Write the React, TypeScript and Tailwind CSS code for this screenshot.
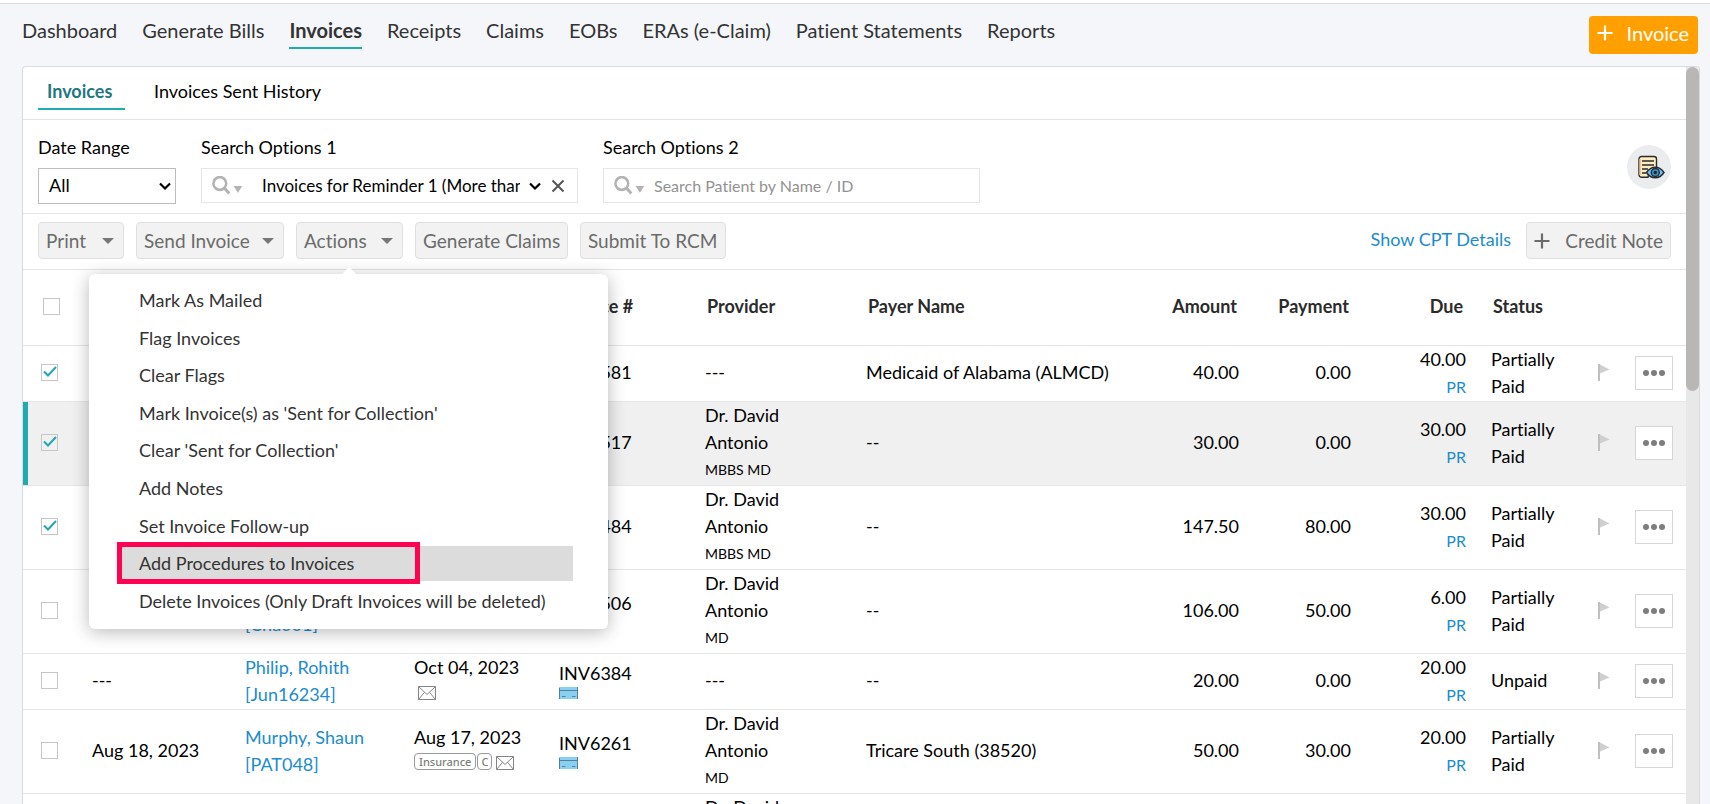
import React from 'react';

interface Invoice {
  checked?: boolean;
  active?: boolean;
  short?: boolean;
  date?: string;
  patient?: string[];
  created?: string;
  insurance?: boolean;
  mail?: boolean;
  number: string;
  card?: boolean;
  credentials?: string;
  payer: string;
  amount: string;
  payment: string;
  due: string;
  status: string;
}

const navItems = ['Dashboard', 'Generate Bills', 'Invoices', 'Receipts', 'Claims', 'EOBs', 'ERAs (e-Claim)', 'Patient Statements', 'Reports'];

const menuItems = [
  'Mark As Mailed',
  'Flag Invoices',
  'Clear Flags',
  "Mark Invoice(s) as 'Sent for Collection'",
  "Clear 'Sent for Collection'",
  'Add Notes',
  'Set Invoice Follow-up',
  'Add Procedures to Invoices',
  'Delete Invoices (Only Draft Invoices will be deleted)',
];

const invoices: Invoice[] = [
  { checked: true, short: true, number: 'INV6581', payer: 'Medicaid of Alabama (ALMCD)', amount: '40.00', payment: '0.00', due: '40.00', status: 'Partially Paid' },
  { checked: true, active: true, number: 'INV6517', credentials: 'MBBS MD', payer: '--', amount: '30.00', payment: '0.00', due: '30.00', status: 'Partially Paid' },
  { checked: true, number: 'INV6484', credentials: 'MBBS MD', payer: '--', amount: '147.50', payment: '80.00', due: '30.00', status: 'Partially Paid' },
  { patient: ['Chandra', '[Cha001]'], number: 'INV6506', card: true, credentials: 'MD', payer: '--', amount: '106.00', payment: '50.00', due: '6.00', status: 'Partially Paid' },
  { short: true, date: '---', patient: ['Philip, Rohith', '[Jun16234]'], created: 'Oct 04, 2023', mail: true, number: 'INV6384', card: true, payer: '--', amount: '20.00', payment: '0.00', due: '20.00', status: 'Unpaid' },
  { date: 'Aug 18, 2023', patient: ['Murphy, Shaun', '[PAT048]'], created: 'Aug 17, 2023', insurance: true, mail: true, number: 'INV6261', card: true, credentials: 'MD', payer: 'Tricare South (38520)', amount: '50.00', payment: '30.00', due: '20.00', status: 'Partially Paid' },
  { number: '', credentials: 'MD', payer: '', amount: '', payment: '', due: '', status: '' },
];

const Caret: React.FC = () => (
  <svg className="mr-0.5" width="12" height="6" viewBox="0 0 12 6" fill="#777">
    <path d="M0 0h12L6 6z" />
  </svg>
);

const Chevron: React.FC = () => (
  <svg className="pointer-events-none absolute right-1 top-1/2 -translate-y-1/2" width="14" height="14" viewBox="0 0 14 14" fill="none" stroke="#000" strokeWidth="2.2">
    <path d="M2 4.5l5 5 5-5" />
  </svg>
);

const SearchIcon: React.FC = () => (
  <svg className="shrink-0" width="31" height="19" viewBox="0 0 31 19" fill="none" stroke="#b3b3b3">
    <circle cx="7.8" cy="7.5" r="6.4" strokeWidth="2.6" />
    <path d="M12.3 12l5 5.4" strokeWidth="3" />
    <path d="M21.5 10h8.800l-4.400 6.800z" fill="#b3b3b3" stroke="none" />
  </svg>
);

const PlusIcon: React.FC = () => (
  <svg className="shrink-0" width="16" height="16" viewBox="0 0 16 16" stroke="currentColor" strokeWidth="2.2">
    <path d="M8 0.5v15M0.5 8h15" />
  </svg>
);

const ReportIcon: React.FC = () => (
  <svg width="28" height="24" viewBox="0 0 28 24" fill="none" stroke="#2b2b33" strokeWidth="1.4">
    <path d="M11 22.300H4.500a2.500 2.500 0 0 1-2.500-2.500V4a2.500 2.500 0 0 1 2.500-2.500h12.500a2.500 2.500 0 0 1 2.500 2.500v9.500L12 18z" fill="#ffeebb" />
    <path d="M3.200 20V4" stroke="#f5c69b" strokeWidth="1.600" />
    <path d="M5 6h12M5 10h12M5 14h6M5 18h4" />
    <path d="M9.500 17.500c4.500-7 13-7 17.500 0-4.500 7-13 7-17.500 0z" fill="#6fc0ef" />
    <circle cx="18.300" cy="17.500" r="4" fill="#3f8fc4" />
    <circle cx="18.300" cy="17.500" r="1.700" fill="#1c2733" stroke="none" />
  </svg>
);

const MailIcon: React.FC = () => (
  <svg width="18" height="14" viewBox="0 0 18 14" fill="none" stroke="#858585">
    <path d="M0.500 0.500h17v13h-17zM0.500 0.500l8.500 8 8.500-8M0.500 13.500l6-7.300M17.500 13.500l-6-7.300" />
  </svg>
);

const CardIcon: React.FC = () => (
  <svg width="19" height="12" viewBox="0 0 19 12">
    <path d="M0 0h19v12H0z" fill="#89cff2" />
    <path d="M0 3.500h18.500M18.500 0v12M0.500 1v11M3 9.500h3.500M13 9.500h3.500" stroke="#57819b" fill="none" />
  </svg>
);

const FlagIcon: React.FC = () => (
  <svg width="12" height="17" viewBox="0 0 12 17">
    <path d="M2 0.500l9.500 5-9.500 4z" fill="#cfcfcf" />
    <path d="M1 0v17" stroke="#b9b9b9" strokeWidth="1.800" />
  </svg>
);

const Checkbox: React.FC<{ label: string; checked?: boolean }> = ({ label, checked }) => (
  <span className="relative block size-[17px]">
    <input type="checkbox" aria-label={label} defaultChecked={checked} className="peer block size-full appearance-none border border-[#c6c6c6]" />
    <svg className="pointer-events-none absolute inset-0 hidden peer-checked:block" width="17" height="17" viewBox="0 0 17 17" fill="none" stroke="#22a6b3" strokeWidth="2">
      <path d="M3 7.500l4 4 8-8.500" />
    </svg>
  </span>
);

const ActionsMenu: React.FC = () => (
  <div className="absolute -left-[207px] top-[52px] z-10 w-[519px] rounded-md bg-white pt-2 pb-[9px] pl-[30px] pr-[35px] text-[#333] shadow-[0_3px_18px_rgba(0,0,0,0.28)]">
    <div className="absolute -top-[7px] left-[253px] border-x-[7px] border-b-[7px] border-x-transparent border-b-white" />
    <ul className="grid h-[338px] auto-rows-fr">
      {menuItems.map((item) => {
        const highlighted = item === 'Add Procedures to Invoices';
        return (
          <li key={item} className="relative flex items-center">
            <button className={highlighted ? 'h-[35px] w-full bg-[#dcdcdc] pl-5 text-left' : 'h-[35px] w-full whitespace-nowrap pl-5 text-left'}>{item}</button>
            {highlighted && <span className="pointer-events-none absolute -left-[2px] -top-[3px] h-[42px] w-[303px] border-[5px] border-[#ff0252]" />}
          </li>
        );
      })}
    </ul>
  </div>
);

const toolButton = 'flex h-[37px] items-center justify-between whitespace-nowrap rounded border border-[#dfdfdf] bg-[#f2f2f2] px-[7px] text-[19px] text-[#6b6b6b]';

const InvoiceRow: React.FC<{ invoice: Invoice }> = ({ invoice }) => (
  <tr className={`${invoice.short ? 'h-14' : 'h-[84px]'} border-b border-[#e6e6e6] [&>td]:pb-px ${invoice.active ? 'bg-[#f0f0f0]' : ''}`}>
    <td className={invoice.active ? 'pl-[18px] shadow-[inset_5px_0_0_#22aab2]' : 'pl-[18px]'}>
      <Checkbox label={`Select ${invoice.number}`} checked={invoice.checked} />
    </td>
    <td className="pl-[5px]">{invoice.date}</td>
    <td className="pl-[5px]">
      {invoice.patient && (
        <a href="#" className="text-[#1b8ccd]">
          {invoice.patient[0]}
          <br />
          {invoice.patient[1]}
        </a>
      )}
    </td>
    <td className="pl-[5px]">
      {invoice.created}
      {invoice.mail && (
        <div className={invoice.insurance ? 'mb-2 flex h-[19px] items-end' : 'mb-2 flex h-[19px] items-end pl-1'}>
          {invoice.insurance && (
            <div className="mr-1 flex gap-px font-['Noto_Sans'] text-[11px] leading-[15px] font-medium text-[#7b8078]">
              <span className="rounded-sm border border-[#999] px-1">Insurance</span>
              <span className="rounded-sm border border-[#999] px-[3px]">C</span>
            </div>
          )}
          <MailIcon />
        </div>
      )}
    </td>
    <td className="pl-[5px]">
      {invoice.number}
      {invoice.card && <div className="mb-0.5"><CardIcon /></div>}
    </td>
    <td className="pl-[5px] pr-12">
      {invoice.credentials ? (
        <>
          Dr. David Antonio
          <div className="text-[14px]">{invoice.credentials}</div>
        </>
      ) : '---'}
    </td>
    <td className="pl-[5px]">{invoice.payer}</td>
    <td className="pr-[5px] text-right">{invoice.amount}</td>
    <td className="pr-[5px] text-right">{invoice.payment}</td>
    <td className="pr-5 text-right">
      {invoice.due}
      {invoice.due && <div className="text-[16px] text-[#1b8ccd]">PR</div>}
    </td>
    <td className="pl-[5px] pr-6">{invoice.status}</td>
    <td className="pl-2"><FlagIcon /></td>
    <td className="pl-1.5">
      <button aria-label="More" className="flex h-[34px] w-[38px] items-center justify-center gap-[2px] border border-[#d6d6d6] bg-white">
        <span className="size-1.5 rounded-full bg-[#7d7d7d]" />
        <span className="size-1.5 rounded-full bg-[#7d7d7d]" />
        <span className="size-1.5 rounded-full bg-[#7d7d7d]" />
      </button>
    </td>
  </tr>
);

export default function App() {
  return (
    <div className="flex h-screen flex-col overflow-hidden bg-[#f4f6fa] font-[Lato,sans-serif] text-[18px] leading-[27px] text-black [font-variant-ligatures:none]">
      <div className="h-1 shrink-0 border-b border-[#dcdcdf] bg-white" />
      <header className="flex h-[62px] shrink-0 items-start justify-between pl-[22px] pr-3">
        <nav className="flex gap-[25px] pt-[13px] text-[20px] text-[#333]">
          {navItems.map((item) => (
            <a key={item} href="#" className={item === 'Invoices' ? 'h-8 border-b-2 border-[#22aab2] font-bold' : 'h-8'}>{item}</a>
          ))}
        </nav>
        <button className="mt-3 flex h-[38px] w-[109px] items-center justify-between rounded bg-[#ffa000] pb-1 pl-2 pr-[9px] text-[20px] text-white">
          <PlusIcon />
          Invoice
        </button>
      </header>

      <main className="ml-[22px] mr-2.5 flex min-h-0 flex-1 overflow-hidden rounded-t border border-b-0 border-[#d9dbe0] bg-white">
        <div className="min-w-0 flex-1">
          <div className="flex h-[53px] gap-[29px] border-b border-[#e4e4e4] pl-[15px] pt-[11px]">
            <a href="#" className="h-8 w-[87px] border-b-2 border-[#22aab2] pl-[9px] font-bold text-[#1f7780]">Invoices</a>
            <a href="#">Invoices Sent History</a>
          </div>

          <div className="flex h-[94px] items-start border-b border-[#e4e4e4] pl-[15px] pr-[15px] pt-3.5">
            <div className="w-[163px]">
              <label htmlFor="date-range" className="block">Date Range</label>
              <div className="relative mt-[7px] w-[138px]">
                <select id="date-range" className="h-9 w-full appearance-none border border-[#bdbdbd] bg-white pl-2.5 pb-0.5">
                  <option>All</option>
                </select>
                <Chevron />
              </div>
            </div>
            <div className="w-[402px]">
              <label htmlFor="search-1" className="block">Search Options 1</label>
              <div className="mt-[7px] flex h-[35px] w-[377px] items-center border border-[#e6e6e6] pl-2.5">
                <SearchIcon />
                <div className="relative ml-[19px] w-[284px]">
                  <select id="search-1" className="block w-full appearance-none truncate bg-white pr-[26px] text-[17px] text-clip">
                    <option>Invoices for Reminder 1 (More than 30 days)</option>
                  </select>
                  <Chevron />
                </div>
                <button aria-label="Clear" className="ml-[5px]">
                  <svg width="14" height="14" viewBox="0 0 14 14" stroke="#555" strokeWidth="2">
                    <path d="M1.500 1.500l11 11M12.500 1.500l-11 11" />
                  </svg>
                </button>
              </div>
            </div>
            <div>
              <label htmlFor="search-2" className="block">Search Options 2</label>
              <div className="mt-[7px] flex h-[35px] w-[377px] items-center border border-[#e6e6e6] pb-px pl-2.5">
                <SearchIcon />
                <input id="search-2" placeholder="Search Patient by Name / ID" className="ml-[9px] min-w-0 flex-1 text-[16px] outline-none placeholder:text-[#929292]" />
              </div>
            </div>
            <button aria-label="View report" className="ml-auto mt-[11px] flex size-11 items-center justify-center rounded-full bg-[#ebecee] pl-1">
              <ReportIcon />
            </button>
          </div>

          <div className="flex h-14 items-center border-b border-[#e4e4e4] pb-0.5 pl-[15px] pr-[15px]">
            <div className="flex gap-3">
              <button className={`${toolButton} w-[86px]`}>Print<Caret /></button>
              <button className={`${toolButton} w-[148px]`}>Send Invoice<Caret /></button>
              <div className="relative">
                <button className={`${toolButton} w-[107px]`}>Actions<Caret /></button>
                <ActionsMenu />
              </div>
              <button className={`${toolButton} w-[153px]`}>Generate Claims</button>
              <button className={`${toolButton} w-[146px]`}>Submit To RCM</button>
            </div>
            <a href="#" className="ml-auto mr-[15px] pb-0.5 text-[#1b8ccd]">Show CPT Details</a>
            <button className={`${toolButton} w-[145px]`}><PlusIcon />Credit Note</button>
          </div>

          <table className="w-full table-fixed border-collapse text-left">
            <colgroup>
              <col className="w-16" />
              <col className="w-[153px]" />
              <col className="w-[169px]" />
              <col className="w-[145px]" />
              <col className="w-[146px]" />
              <col className="w-[161px]" />
              <col />
              <col className="w-[120px]" />
              <col className="w-[112px]" />
              <col className="w-[130px]" />
              <col className="w-[104px]" />
              <col className="w-[39px]" />
              <col className="w-[57px]" />
            </colgroup>
            <thead>
              <tr className="h-[75px] border-b border-[#e4e4e4] text-[#2b2b2b] [&>th]:pb-0.5">
                <th className="pl-5"><Checkbox label="Select all" /></th>
                <th className="pl-[7px]">Date</th>
                <th className="pl-[7px]">Patient</th>
                <th className="pl-[7px]">Created</th>
                <th className="pl-[7px]">Invoice #</th>
                <th className="pl-[7px]">Provider</th>
                <th className="pl-[7px]">Payer Name</th>
                <th className="pr-[7px] text-right">Amount</th>
                <th className="pr-[7px] text-right">Payment</th>
                <th className="pr-[23px] text-right">Due</th>
                <th className="pl-[7px]">Status</th>
                <th />
                <th />
              </tr>
            </thead>
            <tbody>
              {invoices.map((invoice) => (
                <InvoiceRow key={invoice.number} invoice={invoice} />
              ))}
            </tbody>
          </table>
        </div>
        <div className="w-[13px] shrink-0 bg-[#e8e8e8]">
          <div className="h-[324px] rounded-full bg-[#b8b7b6]" />
        </div>
      </main>
    </div>
  );
}
